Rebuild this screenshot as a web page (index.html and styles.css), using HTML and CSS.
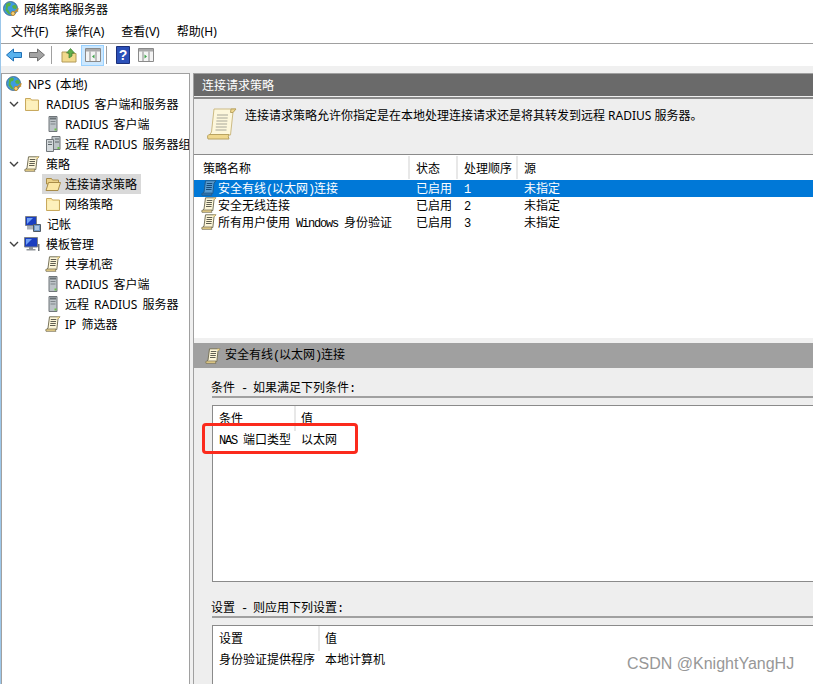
FILE: index.html
```html
<!DOCTYPE html>
<html lang="zh-CN">
<head>
  <meta charset="UTF-8" />
  <meta name="viewport" content="width=device-width, initial-scale=1.0" />
  <title>网络策略服务器</title>
  <link rel="stylesheet" href="styles.css">
</head>
<body>
  <svg class="defs" width="0" height="0">
    <symbol id="globe" viewBox="0 0 16 16">
      <circle cx="7.500" cy="7.500" r="7" fill="#3d9ae0" stroke="#3c5f80" stroke-width=".8"/>
      <path d="M3 3l3-1.500 2 1-1 2.500-2 .5-.5 2.500 2 3 1 2.500-2-.5-3-3.500zM9 5l3-1.500 2 2.500-1 2-3-.5z" fill="#57b045"/>
      <circle cx="10" cy="12.500" r="2" fill="#f6d27a" stroke="#b8862c" stroke-width="1"/>
      <path d="M11.500 11l4-3.500M14 9.500l1 1" stroke="#c9922f" stroke-width="1.500" fill="none"/>
    </symbol>
    <symbol id="folder" viewBox="0 0 16 16">
      <path d="M1.500 2.500h5l1 1.500h7v10.500h-13z" fill="#fbe9a8" stroke="#c8a95e"/>
      <path d="M2.500 5h11v8.500h-11z" fill="#fdf0bc"/>
    </symbol>
    <symbol id="folder-open" viewBox="0 0 16 16">
      <path d="M1.500 2.500h5l1 1.500h6v4h-12z" fill="#ecd28a" stroke="#a98c48"/>
      <path d="M1 14.500l2.500-8h12l-2.500 8z" fill="#fbe6a4" stroke="#a98c48"/>
    </symbol>
    <symbol id="scroll" viewBox="0 0 16 16">
      <path d="M4.500 .8h10.500l-2 2.200-1.200 10.500h-10l1.200-1.500z" fill="#fdf6d8" stroke="#77725a"/>
      <path d="M1 15.300q-1-2.300 1-2.300h9q-1 1.200 0 2.300z" fill="#eed48a" stroke="#77725a" stroke-width=".8"/>
      <path d="M12.500 .8h2.500l-1.500 2h-1.500z" fill="#eed48a"/>
      <path d="M5.800 3.500h5.500M5.500 5.500h5.500M5.300 7.500h5.500M5 9.500h5.500" stroke="#605f52"/>
    </symbol>
    <symbol id="scroll-big" viewBox="0 0 30 32">
      <path d="M7 1h22l-3 3-2.500 23h-21l2-3z" fill="#fdf7dc" stroke="#cdbb84"/>
      <path d="M1 31q-1.500-4.500 2-4.500h19q-1.500 2.300 0 4.500z" fill="#f0d88e" stroke="#b9a362"/>
      <path d="M24 1h5l-3 3.500h-2.500z" fill="#f0d88e" stroke="#b9a362"/>
      <path d="M10 7h11M9.700 10h11M9.400 13h11M9.100 16h11M8.800 19h11M8.500 22h11" stroke="#a8a79a"/>
    </symbol>
    <symbol id="scroll-sel" viewBox="0 0 16 16">
      <path d="M4.500 .8h10.500l-2 2.200-1.200 10.500h-10l1.200-1.500z" fill="#5a9ccf" stroke="#1f5c8e"/>
      <path d="M1 15.300q-1-2.300 1-2.300h9q-1 1.200 0 2.300z" fill="#2f74ad" stroke="#1f5c8e" stroke-width=".8"/>
      <path d="M5.800 3.500h5.500M5.500 5.500h5.500M5.300 7.500h5.500M5 9.500h5.500" stroke="#164a78"/>
    </symbol>
    <symbol id="server" viewBox="0 0 16 16">
      <path d="M4 .5h8v15h-8z" fill="#bcc3c7" stroke="#70767a"/>
      <path d="M5 1.500h6v2h-6z" fill="#6b7276"/>
      <path d="M5.500 5h5v1h-5zM5.500 7.500h5v1h-5z" fill="#7f868a"/>
      <path d="M9.500 12.500h2v2h-2z" fill="#6cc24a"/>
    </symbol>
    <symbol id="servers" viewBox="0 0 16 16">
      <path d="M7 .5h8v13h-8z" fill="#bcc3c7" stroke="#70767a"/>
      <path d="M1.500 3.500h7v12h-7z" fill="#d5dadd" stroke="#70767a"/>
      <path d="M3 5.500h4v1h-4zM3 8h4v1h-4zM10 2.500h4v1h-4zM10 5.500h4v1h-4z" fill="#5c6468"/>
      <path d="M12.500 11h2v2h-2z" fill="#6cc24a"/>
    </symbol>
    <symbol id="monitor" viewBox="0 0 16 16">
      <path d="M.5 1.500h13v9.500h-13z" fill="#1a3ec0" stroke="#7d8288"/>
      <path d="M2 3l6 0-6 6z" fill="#6fa0f5"/>
      <path d="M5 11h4v2h2.500v1.500h-9v-1.500h2.500z" fill="#8f9499"/>
      <path d="M14 8h1.500v7h-1.500z" fill="#6d7277"/>
    </symbol>
    <symbol id="accounting" viewBox="0 0 16 16">
      <path d="M.5 .5h11v9h-11z" fill="#1a3ec0" stroke="#7d8288"/>
      <path d="M2 2l6 0-6 6z" fill="#6fa0f5"/>
      <path d="M2 10h7v3.500h-7z" fill="#aeb3b8"/>
      <path d="M8.500 8.500h7v7h-7z" fill="#6f98c8" stroke="#4f5a64"/>
      <path d="M10 11h4M10 13h4" stroke="#e6eef6"/>
    </symbol>
    <symbol id="chevron" viewBox="0 0 10 6">
      <path d="M1 1l4 4 4-4" fill="none" stroke="#404040" stroke-width="1.400"/>
    </symbol>
  </svg>

  <div class="titlebar">
    <svg class="ico"><use href="#globe"/></svg>
    <span>网络策略服务器</span>
  </div>

  <div class="menubar">
    <span>文件(F)</span>
    <span>操作(A)</span>
    <span>查看(V)</span>
    <span>帮助(H)</span>
  </div>

  <div class="toolbar">
    <svg class="tool" viewBox="0 0 16 14"><path d="M7.500 1v3.500h8v5h-8v3.500l-7-6z" fill="#58b2ee" stroke="#1f6fb5"/></svg>
    <svg class="tool" viewBox="0 0 16 14"><path d="M8.500 1v3.500h-8v5h8v3.500l7-6z" fill="#a3a3a3" stroke="#6f6f6f"/></svg>
    <i class="tool-sep"></i>
    <svg class="tool tool-up" viewBox="0 0 16 16">
      <path d="M1 5h5l1 1.500h8v8.500h-14z" fill="#f1d98c" stroke="#b39a58"/>
      <path d="M8 11v-5h-2.500l4-4.500 4 4.500h-2.500v3z" fill="#5fae4a" stroke="#3f7f32" stroke-width=".7"/>
    </svg>
    <div class="tool-btn">
      <svg class="tool" viewBox="0 0 16 14">
        <path d="M.5 .5h15v13h-15z" fill="#f4f4f4" stroke="#8a8a8a"/>
        <path d="M1 1h14v2.500h-14z" fill="#a9a9a9"/>
        <path d="M5 3.500v10M11 3.500v10" stroke="#8a8a8a"/>
        <path d="M9.500 6.500v4l-2.500-2z" fill="#3fa34a"/>
      </svg>
    </div>
    <i class="tool-sep tool-sep-near"></i>
    <svg class="tool-help" viewBox="0 0 14 18">
      <path d="M.5 .5h13v17h-13z" fill="#2b50b8" stroke="#1b2f7a"/>
      <text x="7" y="14" text-anchor="middle" class="help-mark">?</text>
    </svg>
    <svg class="tool tool-last" viewBox="0 0 16 14">
      <path d="M.5 .5h15v13h-15z" fill="#f4f4f4" stroke="#8a8a8a"/>
      <path d="M1 1h14v2.500h-14z" fill="#a9a9a9"/>
      <path d="M5 3.500v10M11 3.500v10" stroke="#8a8a8a"/>
      <path d="M6.500 6.500v4l2.500-2z" fill="#3fa34a"/>
    </svg>
  </div>

  <div class="main">
    <!-- 左侧树 -->
    <div class="tree">
      <div class="node"><svg class="ico"><use href="#globe"/></svg><span>NPS (本地)</span></div>
      <div class="node lv1"><svg class="chev"><use href="#chevron"/></svg><svg class="ico"><use href="#folder"/></svg><span>RADIUS 客户端和服务器</span></div>
      <div class="node lv2"><svg class="ico"><use href="#server"/></svg><span>RADIUS 客户端</span></div>
      <div class="node lv2"><svg class="ico"><use href="#servers"/></svg><span>远程 RADIUS 服务器组</span></div>
      <div class="node lv1"><svg class="chev"><use href="#chevron"/></svg><svg class="ico"><use href="#scroll"/></svg><span>策略</span></div>
      <div class="node lv2 current"><svg class="ico"><use href="#folder-open"/></svg><span>连接请求策略</span></div>
      <div class="node lv2"><svg class="ico"><use href="#folder"/></svg><span>网络策略</span></div>
      <div class="node lv1 leaf"><svg class="ico"><use href="#accounting"/></svg><span>记帐</span></div>
      <div class="node lv1"><svg class="chev"><use href="#chevron"/></svg><svg class="ico"><use href="#monitor"/></svg><span>模板管理</span></div>
      <div class="node lv2"><svg class="ico"><use href="#scroll"/></svg><span>共享机密</span></div>
      <div class="node lv2"><svg class="ico"><use href="#server"/></svg><span>RADIUS 客户端</span></div>
      <div class="node lv2"><svg class="ico"><use href="#server"/></svg><span>远程 RADIUS 服务器</span></div>
      <div class="node lv2"><svg class="ico"><use href="#scroll"/></svg><span>IP 筛选器</span></div>
    </div>

    <!-- 右侧内容 -->
    <div class="content">
      <div class="content-title">连接请求策略</div>
      <div class="upper">
        <div class="desc">
          <svg class="desc-ico"><use href="#scroll-big"/></svg>
          <p>连接请求策略允许你指定是在本地处理连接请求还是将其转发到远程 RADIUS 服务器。</p>
        </div>
        <div class="list">
          <div class="list-row list-head">
            <span class="c-name">策略名称</span>
            <span class="c-state">状态</span>
            <span class="c-order">处理顺序</span>
            <span class="c-src">源</span>
          </div>
          <div class="list-row selected">
            <span class="c-name"><svg class="ico"><use href="#scroll-sel"/></svg>安全有线<b class="mono">(</b>以太网<b class="mono">)</b>连接</span>
            <span class="c-state">已启用</span><span class="c-order">1</span><span class="c-src">未指定</span>
          </div>
          <div class="list-row">
            <span class="c-name"><svg class="ico"><use href="#scroll"/></svg>安全无线连接</span>
            <span class="c-state">已启用</span><span class="c-order">2</span><span class="c-src">未指定</span>
          </div>
          <div class="list-row">
            <span class="c-name"><svg class="ico"><use href="#scroll"/></svg>所有用户使用<b class="mono"> Windows </b>身份验证</span>
            <span class="c-state">已启用</span><span class="c-order">3</span><span class="c-src">未指定</span>
          </div>
        </div>
      </div>

      <div class="lower">
        <div class="lower-title"><svg class="ico"><use href="#scroll"/></svg><span>安全有线<b class="mono">(</b>以太网<b class="mono">)</b>连接</span></div>
        <div class="lower-body">
          <div class="group-label">条件<b class="mono"> - </b>如果满足下列条件<b class="mono">:</b></div>
          <div class="box box-cond">
            <div class="box-row box-head"><span class="k-cond">条件</span><span class="v-col">值</span></div>
            <div class="box-row"><span class="k-cond"><b class="mono">NAS </b>端口类型</span><span class="v-col">以太网</span></div>
          </div>
          <div class="group-label group-second">设置<b class="mono"> - </b>则应用下列设置<b class="mono">:</b></div>
          <div class="box box-set">
            <div class="box-row box-head"><span class="k-set">设置</span><span class="v-col">值</span></div>
            <div class="box-row"><span class="k-set">身份验证提供程序</span><span class="v-col">本地计算机</span></div>
          </div>
        </div>
      </div>
    </div>
  </div>

  <div class="red-mark"></div>
  <div class="watermark">CSDN @KnightYangHJ</div>
</body>
</html>
```

FILE: styles.css
```css
* {
  box-sizing: border-box;
}
html, body {
  height: 100%;
}
body {
  margin: 0;
  height: 684px;
  overflow: hidden;
  position: relative;
  background: #f0f0f0;
  color: #000;
  border-left: 1px solid #9cc7ea;
  font-family: "Noto Sans", "Noto Sans CJK SC", sans-serif;
  font-size: 12px;
  line-height: 17px;
}
.defs {
  position: absolute;
}
.ico {
  width: 16px;
  height: 16px;
  flex: none;
}
.mono {
  font-family: "Liberation Mono", monospace;
  font-weight: 400;
  letter-spacing: -1.2px;
  white-space: pre;
}
.titlebar {
  height: 22px;
  background: #fff;
  display: flex;
  align-items: center;
  gap: 5px;
  padding: 0 0 4px 2px;
}
.menubar {
  height: 22px;
  background: #fff;
  border-bottom: 1px solid #a0a0a0;
  display: flex;
  align-items: center;
  padding: 0 0 2px 10px;
  gap: 17px;
}
.toolbar {
  height: 22px;
  background: #fff;
  display: flex;
  align-items: center;
  padding-left: 5px;
}
.tool {
  width: 16px;
  height: 14px;
  margin-right: 7px;
  flex: none;
}
.tool-sep {
  width: 1px;
  height: 18px;
  background: #a0a0a0;
  margin: 0 9px 0 -1px;
}
.tool-sep-near {
  margin: 0 9px 0 2px;
}
.tool-up {
  height: 16px;
  margin-right: 4px;
}
.tool-btn {
  width: 23px;
  height: 21px;
  background: #cce8ff;
  border: 1px solid #99d1ff;
  display: flex;
  align-items: center;
  justify-content: center;
}
.tool-btn .tool {
  margin: 0;
}
.tool-help {
  width: 14px;
  height: 18px;
  margin-right: 8px;
}
.help-mark {
  fill: #fff;
  font-size: 14px;
  font-weight: bold;
  font-family: "Liberation Sans", sans-serif;
}
.main {
  display: flex;
  margin-top: 7px;
  height: 611px;
  gap: 3px;
}
.tree {
  width: 189px;
  flex: none;
  background: #fff;
  border: 1px solid #a0a0a0;
  border-width: 1px 1px 0 1px;
  overflow: hidden;
}
.node {
  height: 20px;
  display: flex;
  align-items: center;
  gap: 6px;
  padding-left: 4px;
  white-space: nowrap;
  word-spacing: 2px;
}
.lv1 {
  padding-left: 7px;
}
.lv1.leaf {
  padding-left: 23px;
}
.lv2 {
  padding-left: 43px;
  gap: 4px;
}
.chev {
  width: 10px;
  height: 6px;
  margin-right: -1px;
  flex: none;
}
.current {
  position: relative;
  z-index: 0;
}
.current::before {
  content: "";
  position: absolute;
  z-index: -1;
  left: 40px;
  top: 0;
  width: 99px;
  height: 20px;
  background: #d9d9d9;
}
.content {
  flex: 1;
  min-width: 0;
  display: flex;
  flex-direction: column;
  border-left: 1px solid #a0a0a0;
}
.content-title {
  height: 23px;
  background: #6a6a6a;
  border-top: 1px solid #a0a0a0;
  color: #fff;
  padding: 3px 0 0 8px;
  flex: none;
}
.upper {
  height: 241px;
  flex: none;
  margin-top: 1px;
  background: #fff;
  border-top: 2px solid #8a8a8a;
  display: flex;
  flex-direction: column;
}
.desc {
  height: 56px;
  flex: none;
  background: #eeeeee;
  border-bottom: 1px solid #8a8a8a;
  display: flex;
  padding: 9px 0 0 13px;
}
.desc-ico {
  width: 30px;
  height: 32px;
  flex: none;
}
.desc p {
  margin: -1px 0 0 8px;
  white-space: nowrap;
}
.list {
  flex: 1;
  font-family: "Liberation Mono", "Noto Sans CJK SC", monospace;
}
.list-row {
  height: 17px;
  line-height: 20px;
  display: flex;
  white-space: nowrap;
}
.list-head {
  height: 25px;
  font-family: "Noto Sans", "Noto Sans CJK SC", sans-serif;
}
.list-head span {
  height: 23px;
  line-height: 25px;
  margin-top: 1px;
  border-right: 2px solid #e8e8e8;
}
.list-head .c-src {
  border: none;
}
.list-row .ico {
  margin: 0 1px 0 -2px;
  vertical-align: top;
}
.c-name {
  width: 216px;
  padding-left: 9px;
  flex: none;
}
.c-state {
  width: 48px;
  padding-left: 6px;
  flex: none;
}
.c-order {
  width: 60px;
  padding-left: 6px;
  flex: none;
}
.c-src {
  padding-left: 6px;
}
.selected {
  background: #0078d7;
  color: #fff;
}
.lower {
  flex: 1;
  display: flex;
  flex-direction: column;
  min-height: 0;
  margin-top: 5px;
}
.lower-title {
  height: 25px;
  flex: none;
  background: #a0a0a0;
  display: flex;
  align-items: center;
  gap: 4px;
  padding-left: 11px;
}
.lower-body {
  flex: 1;
  background: #eeeeee;
  padding: 11px 0 0 18px;
  overflow: hidden;
}
.group-label {
  height: 19px;
  border-bottom: 2px solid #a0a0a0;
  white-space: nowrap;
  text-indent: -1px;
}
.group-second {
  margin-top: 17px;
}
.box {
  margin-top: 7px;
  background: #fff;
  border: 1px solid #8a8a8a;
  border-right: none;
}
.box-cond {
  height: 177px;
}
.box-set {
  height: 80px;
}
.box-row {
  display: flex;
  height: 17px;
  line-height: 17px;
  white-space: nowrap;
}
.box-head {
  height: 25px;
  line-height: 25px;
}
.box-head span:first-child {
  border-right: 2px solid #e8e8e8;
}
.k-cond {
  width: 83px;
  padding-left: 6px;
  flex: none;
}
.k-set {
  width: 107px;
  padding-left: 6px;
  flex: none;
}
.v-col {
  padding-left: 5px;
}
.red-mark {
  position: absolute;
  left: 201px;
  top: 423px;
  width: 156px;
  height: 31px;
  border: 3px solid #fb2a1c;
  border-radius: 4px;
}
.watermark {
  position: absolute;
  left: 626px;
  top: 654px;
  font-family: "Liberation Sans", sans-serif;
  font-size: 16px;
  line-height: 20px;
  color: #979797;
  text-shadow: 0 0 2px #fff;
  white-space: nowrap;
}
```
